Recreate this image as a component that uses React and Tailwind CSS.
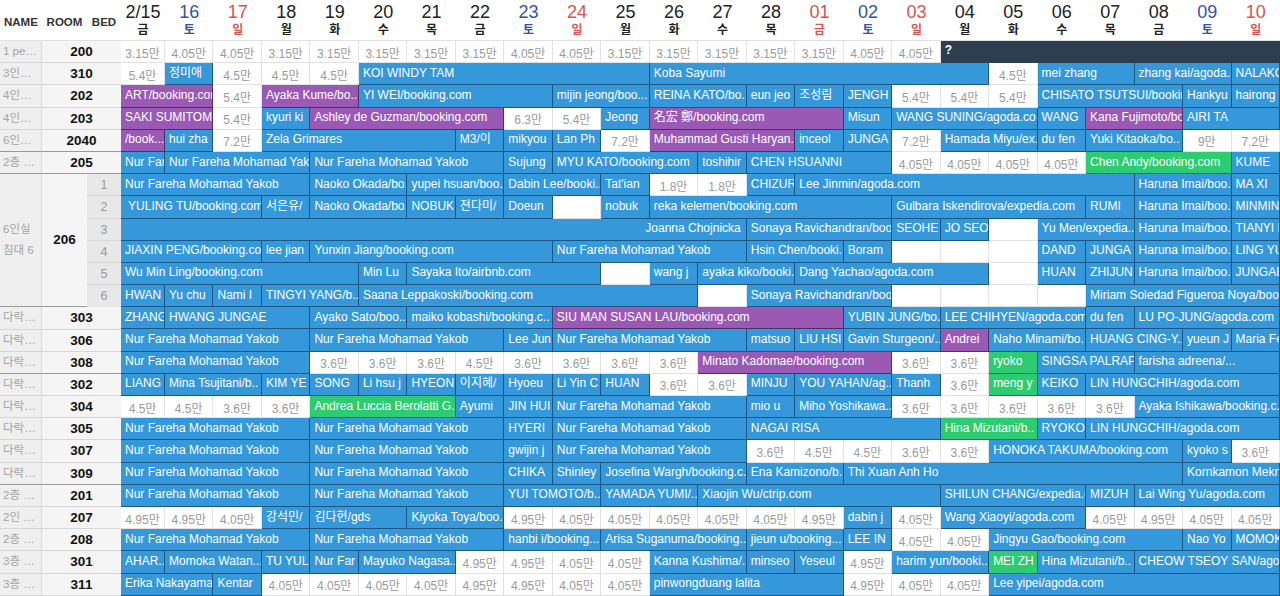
const NF = 'Nur Fareha Mohamad Yakob';

const B = (span, text, align) => ({ k: 'b', span, text, align });
const V = (span, text) => ({ k: 'v', span, text });
const G = (span, text) => ({ k: 'g', span, text });
const D = (span, text) => ({ k: 'd', span, text });
const W = (n) => Array.from({ length: n }, () => ({ k: 'w', span: 1 }));
const P = (...vals) => vals.map((v) => ({ k: 'p', span: 1, text: `${v}만` }));

const SPAN = {
  1: 'col-span-1', 2: 'col-span-2', 3: 'col-span-3', 4: 'col-span-4', 5: 'col-span-5',
  6: 'col-span-6', 7: 'col-span-7', 8: 'col-span-8', 9: 'col-span-9', 10: 'col-span-10',
  11: 'col-span-11', 12: 'col-span-12', 13: 'col-span-13',
};

const KIND = {
  b: 'bg-[#3498db] text-white border-[#1d5680] text-[12px] pl-[4px] pb-[2px]',
  v: 'bg-[#9b59b6] text-white border-[#4f2d63] text-[12px] pl-[4px] pb-[2px]',
  g: 'bg-[#2ecc71] text-white border-[#1d7f47] text-[12px] pl-[4px] pb-[2px]',
  d: 'bg-[#2c3e50] text-white border-[#2c3e50] font-bold text-[12px] pl-[4px] pb-[4px]',
  w: 'bg-white border-[#e2e2e2]',
  p: 'bg-white text-[#9a9a9a] border-[#e2e2e2] justify-center text-[12px] pt-[4px]',
};

const DAYS = [
  ['2/15', '금', 'k'], ['16', '토', 'b'], ['17', '일', 'r'], ['18', '월', 'k'], ['19', '화', 'k'],
  ['20', '수', 'k'], ['21', '목', 'k'], ['22', '금', 'k'], ['23', '토', 'b'], ['24', '일', 'r'],
  ['25', '월', 'k'], ['26', '화', 'k'], ['27', '수', 'k'], ['28', '목', 'k'], ['01', '금', 'r'],
  ['02', '토', 'b'], ['03', '일', 'r'], ['04', '월', 'k'], ['05', '화', 'k'], ['06', '수', 'k'],
  ['07', '목', 'k'], ['08', '금', 'k'], ['09', '토', 'b'], ['10', '일', 'r'],
];

const DAY_COLOR = { k: 'text-[#222]', b: 'text-[#3552a8]', r: 'text-[#d9534f]' };

const ROWS = [
  [P('3.15', '4.05', '4.05', '3.15', '3.15', '3.15', '3.15', '3.15', '4.05', '4.05', '3.15', '3.15', '3.15', '3.15', '3.15', '4.05', '4.05'), D(7, '?')],
  [P('5.4'), B(1, '정미애'), P('4.5', '4.5', '4.5'), B(6, 'KOI WINDY TAM'), B(7, 'Koba Sayumi'), P('4.5'), B(2, 'mei zhang'), B(2, 'zhang kai/agoda..'), B(1, 'NALAKO')],
  [V(2, 'ART/booking.com'), P('5.4'), V(2, 'Ayaka Kume/bo...'), B(4, 'YI WEI/booking.com'), B(2, 'mijin jeong/boo...'), B(2, 'REINA KATO/bo...'), B(1, 'eun jeo'), B(1, '조성림'), B(1, 'JENGH'), P('5.4', '5.4', '5.4'), B(3, 'CHISATO TSUTSUI/bookin..'), B(1, 'Hankyu'), B(1, 'hairong w')],
  [V(2, 'SAKI SUMITOM...'), P('5.4'), B(1, 'kyuri ki'), V(4, 'Ashley de Guzman/booking.com'), P('6.3', '5.4'), B(1, 'Jeong'), V(4, '名宏 鄭/booking.com'), B(1, 'Misun'), B(3, 'WANG SUNING/agoda.co'), B(1, 'WANG'), V(2, 'Kana Fujimoto/booking.c..'), B(2, 'AIRI TA')],
  [V(1, '/book...'), B(1, 'hui zha'), P('7.2'), B(4, 'Zela Grimares'), B(1, 'M3/이'), B(1, 'mikyou'), B(1, 'Lan Ph'), P('7.2'), V(3, 'Muhammad Gusti Haryan..'), B(1, 'inceol'), B(1, 'JUNGA'), P('7.2'), B(2, 'Hamada Miyu/ex..'), B(1, 'du fen'), B(2, 'Yuki Kitaoka/bo..'), P('9', '7.2')],
  [B(1, 'Nur Far'), B(3, 'Nur Fareha Mohamad Yak..'), B(4, NF), B(1, 'Sujung'), B(3, 'MYU KATO/booking.com'), B(1, 'toshihir'), B(3, 'CHEN HSUANNI'), P('4.05', '4.05', '4.05', '4.05'), G(3, 'Chen Andy/booking.com'), B(1, 'KUME')],
  [B(4, NF), B(2, 'Naoko Okada/bo...'), B(2, 'yupei hsuan/boo...'), B(2, 'Dabin Lee/booki..'), B(1, "Tat'ian"), P('1.8', '1.8'), B(1, 'CHIZUR'), B(7, 'Lee Jinmin/agoda.com'), B(2, 'Haruna Imai/boo.'), B(1, 'MA XI')],
  [B(3, ' YULING TU/booking.com'), B(1, '서은유/'), B(2, 'Naoko Okada/bo...'), B(1, 'NOBUK'), B(1, '젼다미/'), B(1, 'Doeun'), W(1), B(1, 'nobuk'), B(5, 'reka kelemen/booking.com'), B(4, 'Gulbara Iskendirova/expedia.com'), B(1, 'RUMI'), B(2, 'Haruna Imai/boo.'), B(1, 'MINMIN')],
  [B(13, 'Joanna Chojnicka', 'end'), B(3, 'Sonaya Ravichandran/boo..'), B(1, 'SEOHE'), B(1, 'JO SEO'), W(1), B(2, 'Yu Men/expedia..'), B(2, 'Haruna Imai/boo.'), B(1, 'TIANYI LI')],
  [B(3, 'JIAXIN PENG/booking.co'), B(1, 'lee jian'), B(5, 'Yunxin Jiang/booking.com'), B(4, NF), B(2, 'Hsin Chen/booki..'), B(1, 'Boram'), W(3), B(1, 'DAND'), B(1, 'JUNGA'), B(2, 'Haruna Imai/boo.'), B(1, 'LING YU')],
  [B(5, 'Wu Min Ling/booking.com'), B(1, 'Min Lu'), B(4, 'Sayaka Ito/airbnb.com'), W(1), B(1, 'wang j'), B(2, 'ayaka kiko/booki..'), B(4, 'Dang Yachao/agoda.com'), W(1), B(1, 'HUAN'), B(1, 'ZHIJUN'), B(2, 'Haruna Imai/boo.'), B(1, 'JUNGAE')],
  [B(1, 'HWAN'), B(1, 'Yu chu'), B(1, 'Nami I'), B(2, 'TINGYI YANG/b...'), B(7, 'Saana Leppakoski/booking.com'), W(1), B(3, 'Sonaya Ravichandran/boo..'), W(4), B(4, 'Miriam Soledad Figueroa Noya/boo..')],
  [B(1, 'ZHANG'), B(3, 'HWANG JUNGAE'), B(2, 'Ayako Sato/boo...'), B(3, 'maiko kobashi/booking.c..'), V(6, 'SIU MAN SUSAN LAU/booking.com'), B(2, 'YUBIN JUNG/bo...'), B(3, 'LEE CHIHYEN/agoda.com'), B(1, 'du fen'), B(3, 'LU PO-JUNG/agoda.com')],
  [B(4, NF), B(4, NF), B(1, 'Lee Jun'), B(4, NF), B(1, 'matsuo'), B(1, 'LIU HSI'), B(2, 'Gavin Sturgeon/..'), V(1, 'Andrei'), B(2, 'Naho Minami/bo.'), B(2, 'HUANG CING-Y...'), B(1, 'yueun J'), B(1, 'Maria Fe')],
  [B(4, NF), P('3.6', '3.6', '3.6', '4.5', '3.6', '3.6', '3.6', '3.6'), V(4, 'Minato Kadomae/booking.com'), P('3.6', '3.6'), G(1, 'ryoko'), B(2, 'SINGSA PALRAPHEE/agod..'), B(3, 'farisha adreena/...')],
  [B(1, 'LIANG'), B(2, 'Mina Tsujitani/b..'), B(1, 'KIM YE'), B(1, 'SONG'), B(1, 'Li hsu j'), B(1, 'HYEON'), B(1, '이지혜/'), B(1, 'Hyoeu'), B(1, 'Li Yin C'), B(1, 'HUAN'), P('3.6', '3.6'), B(1, 'MINJU'), B(2, 'YOU YAHAN/ag..'), B(1, 'Thanh'), P('3.6'), G(1, 'meng y'), B(1, 'KEIKO'), B(4, 'LIN HUNGCHIH/agoda.com')],
  [P('4.5', '4.5', '3.6', '3.6'), G(3, 'Andrea Luccia Berolatti G...'), B(1, 'Ayumi'), B(1, 'JIN HUI'), B(4, NF), B(1, 'mio u'), B(2, 'Miho Yoshikawa...'), P('3.6', '3.6', '3.6', '3.6', '3.6'), B(3, 'Ayaka Ishikawa/booking.c..')],
  [B(4, NF), B(4, NF), B(1, 'HYERI'), B(4, NF), B(4, 'NAGAI RISA'), G(2, 'Hina Mizutani/b..'), B(1, 'RYOKO'), B(4, 'LIN HUNGCHIH/agoda.com')],
  [B(4, NF), B(4, NF), B(1, 'gwijin j'), B(4, NF), P('3.6', '4.5', '4.5', '3.6', '3.6'), B(4, 'HONOKA TAKUMA/booking.com'), B(1, 'kyoko s'), P('3.6')],
  [B(4, NF), B(4, NF), B(1, 'CHIKA'), B(1, 'Shinley'), B(3, 'Josefina Wargh/booking.c..'), B(2, 'Ena Kamizono/b..'), B(7, 'Thi Xuan Anh Ho'), B(2, 'Kornkamon Mekm...')],
  [B(4, NF), B(4, NF), B(2, 'YUI TOMOTO/b...'), B(2, 'YAMADA YUMI/..'), B(5, 'Xiaojin Wu/ctrip.com'), B(3, 'SHILUN CHANG/expedia.c..'), B(1, 'MIZUH'), B(3, 'Lai Wing Yu/agoda.com')],
  [P('4.95', '4.95', '4.05'), B(1, '강석민/'), B(2, '김다현/gds'), B(2, 'Kiyoka Toya/boo..'), P('4.95', '4.05', '4.05', '4.05', '4.05', '4.05', '4.95'), B(1, 'dabin j'), P('4.05'), B(3, 'Wang Xiaoyi/agoda.com'), P('4.05', '4.95', '4.05', '4.05')],
  [B(4, NF), B(4, NF), B(2, 'hanbi i/booking...'), B(3, 'Arisa Suganuma/booking...'), B(2, 'jieun u/booking...'), B(1, 'LEE IN'), P('4.05', '4.05'), B(4, 'Jingyu Gao/booking.com'), B(1, 'Nao Yo'), B(1, 'MOMOK')],
  [B(1, 'AHAR...'), B(2, 'Momoka Watan...'), B(1, 'TU YUL'), B(1, 'Nur Far'), B(2, 'Mayuko Nagasa...'), P('4.95', '4.95', '4.05', '4.05'), B(2, 'Kanna Kushima/..'), B(1, 'minseo'), B(1, 'Yeseul'), P('4.95'), B(2, 'harim yun/booki..'), G(1, 'MEI ZH'), B(2, 'Hina Mizutani/b..'), B(3, 'CHEOW TSEOY SAN/agod..')],
  [B(2, 'Erika Nakayama/..'), B(1, 'Kentar'), P('4.05', '4.05', '4.05', '4.05', '4.95', '4.95', '4.05', '4.05'), B(4, 'pinwongduang lalita'), P('4.95', '4.05', '4.05'), B(6, 'Lee yipei/agoda.com')],
];

const BEFORE = [
  { name: '1 pe…', room: '200' },
  { name: '3인…', room: '310' },
  { name: '4인…', room: '202' },
  { name: '4인…', room: '203' },
  { name: '6인…', room: '2040', sep: true },
  { name: '2층 …', room: '205', sep: true },
];

const AFTER = [
  { name: '다락…', room: '303' },
  { name: '다락…', room: '306' },
  { name: '다락…', room: '308', sep: true },
  { name: '다락…', room: '302' },
  { name: '다락…', room: '304' },
  { name: '다락…', room: '305' },
  { name: '다락…', room: '307' },
  { name: '다락…', room: '309', sep: true },
  { name: '2층 …', room: '201' },
  { name: '2인 …', room: '207' },
  { name: '2층 …', room: '208' },
  { name: '3층 …', room: '301' },
  { name: '3층 …', room: '311' },
];

const FONT = { fontFamily: '"Liberation Sans", "Noto Sans CJK KR", sans-serif' };

function RoomRow({ name, room, sep }) {
  return (
    <div className={`flex h-[22.2px] border-b ${sep ? 'border-[#9a9a9a]' : 'border-[#d6d6d6]'}`}>
      <div className="w-[42px] shrink-0 bg-[#efefef] border-r border-[#dcdcdc] pl-[3px] text-[11.5px] text-[#a3a3a3] leading-[21px] whitespace-nowrap overflow-hidden">
        {name}
      </div>
      <div className="flex-1 bg-[#f5f5f5] text-center text-[13.5px] font-bold text-[#111] leading-[22px]">{room}</div>
    </div>
  );
}

function Cell({ c }) {
  const justify = c.align === 'end' ? 'justify-end pr-[5px]' : '';
  return (
    <div className={`${SPAN[c.span]} ${KIND[c.k]} ${justify} flex items-center min-w-0 overflow-hidden whitespace-pre border-r border-b`}>
      {c.text}
    </div>
  );
}

export default function App() {
  return (
    <div className="w-[1280px] h-[596px] overflow-hidden bg-white flex" style={FONT}>
      <div className="w-[121px] shrink-0 flex flex-col">
        <div className="h-[41px] flex items-end pb-[9px] text-[11.5px] font-bold text-[#333] border-b border-[#e0e0e0]">
          <div className="w-[42px] pl-[4px]">NAME</div>
          <div className="w-[45px] text-center">ROOM</div>
          <div className="w-[34px] text-center">BED</div>
        </div>
        {BEFORE.map((r) => (
          <RoomRow key={r.room} {...r} />
        ))}
        <div className="flex h-[133.2px] border-b border-[#9a9a9a]">
          <div className="w-[42px] shrink-0 bg-[#efefef] border-r border-[#dcdcdc] pl-[3px] flex flex-col justify-center text-[11.5px] text-[#a3a3a3] leading-[21px]">
            <span>6인실</span>
            <span>침대 6</span>
          </div>
          <div className="w-[45px] shrink-0 bg-[#f5f5f5] flex items-center justify-center text-[13.5px] font-bold text-[#111]">206</div>
          <div className="flex-1 flex flex-col">
            {[1, 2, 3, 4, 5, 6].map((n) => (
              <div key={n} className="h-[22.2px] bg-[#e8e8e8] border-b border-[#d6d6d6] last:border-b-0 text-center text-[12.5px] text-[#9a9a9a] leading-[22px]">
                {n}
              </div>
            ))}
          </div>
        </div>
        {AFTER.map((r) => (
          <RoomRow key={r.room} {...r} />
        ))}
      </div>

      <div className="flex-1 flex flex-col min-w-0">
        <div className="h-[41px] grid grid-cols-[44px_repeat(23,minmax(0,1fr))] border-b border-[#e0e0e0]">
          {DAYS.map(([d, w, c]) => (
            <div key={d} className={`flex flex-col items-center ${DAY_COLOR[c]}`}>
              <span className="text-[18px] leading-[22px] mt-[1px]">{d}</span>
              <span className="text-[12px] font-bold leading-[14px]">{w}</span>
            </div>
          ))}
        </div>
        {ROWS.map((row, i) => (
          <div key={i} className="h-[22.2px] grid grid-cols-[44px_repeat(23,minmax(0,1fr))]">
            {row.flat().map((c, j) => (
              <Cell key={j} c={c} />
            ))}
          </div>
        ))}
      </div>
    </div>
  );
}
